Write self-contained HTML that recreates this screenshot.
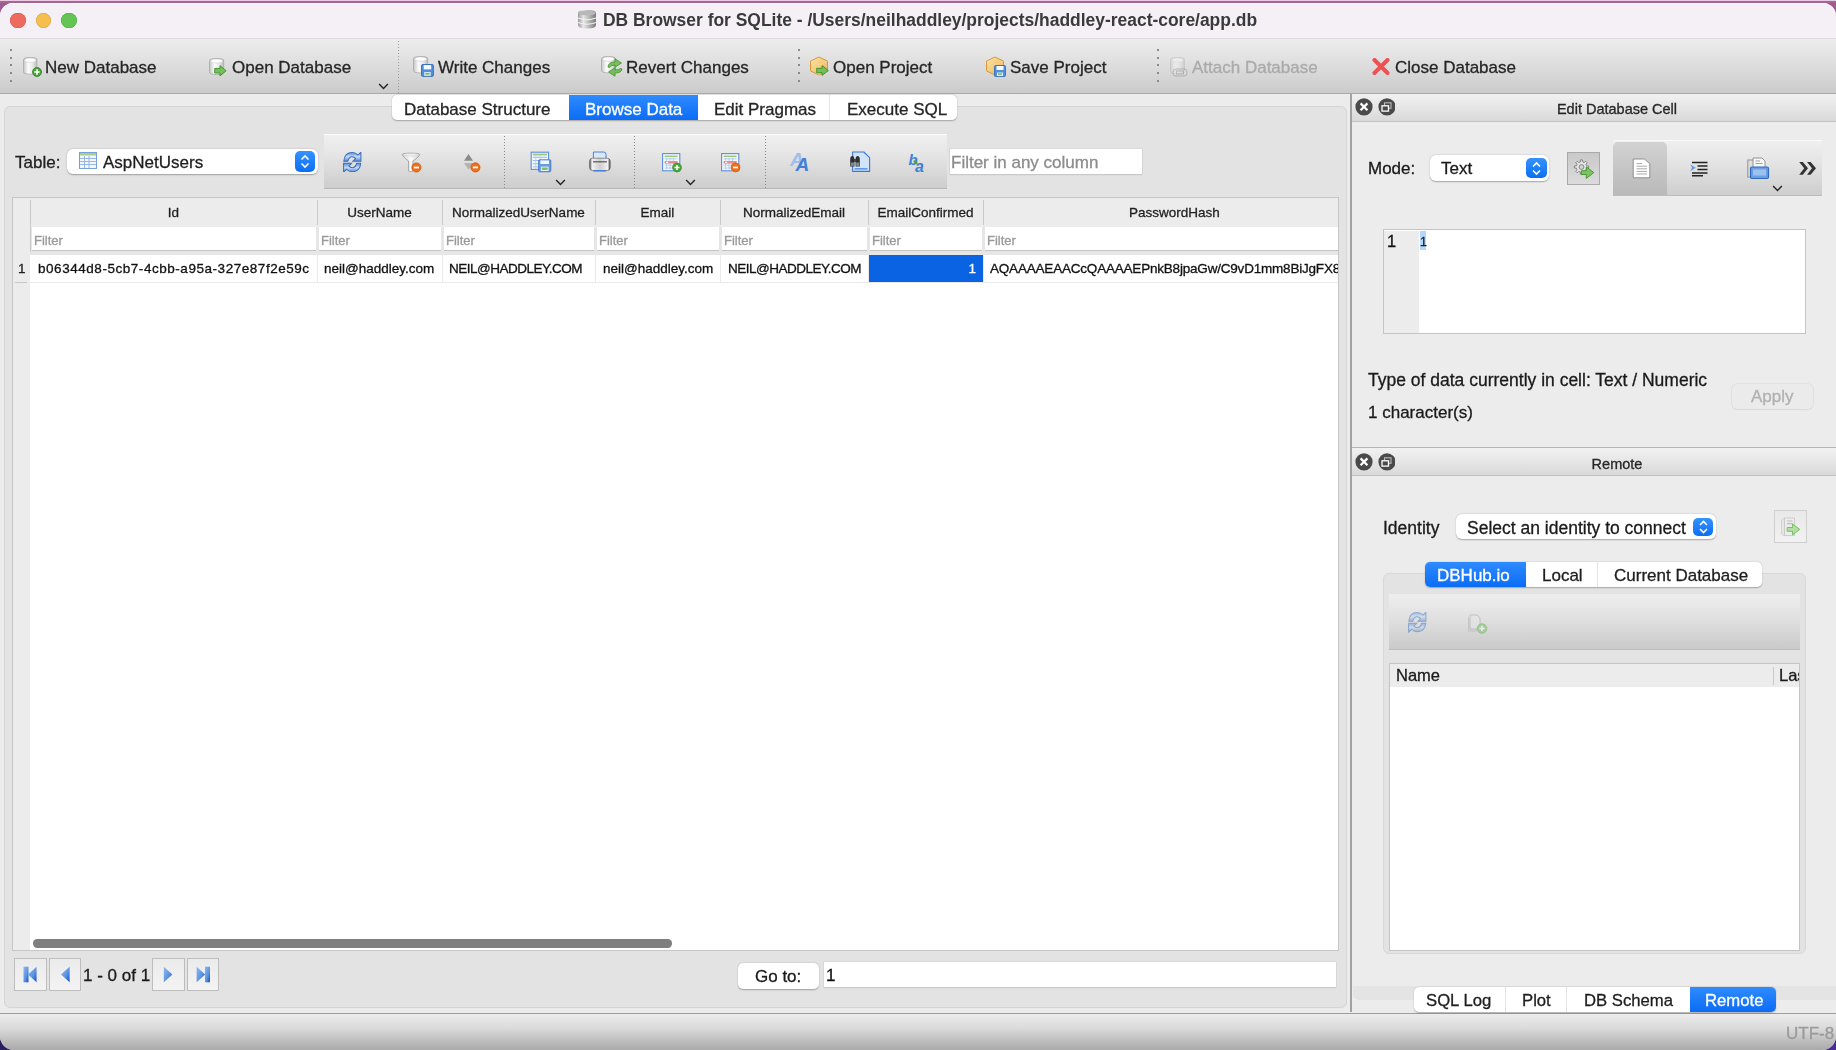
<!DOCTYPE html>
<html><head><meta charset="utf-8">
<style>
*{box-sizing:border-box;margin:0;padding:0}
html,body{width:1836px;height:1050px;overflow:hidden}
body{position:relative;background:#9c5a8e;font-family:"Liberation Sans",sans-serif;color:#1e1e1e}
.a{position:absolute}
.t{position:absolute;white-space:nowrap;line-height:1;will-change:transform;-webkit-text-stroke:.3px currentColor}
#strip{left:0;top:0;width:1836px;height:1px;background:#ecc9e5}
#strip2{left:0;top:1px;width:1836px;height:2px;background:#a4668f}
#blc{left:0;top:1030px;width:30px;height:20px;background:#2b1f5e}
#brc{left:1806px;top:1030px;width:30px;height:20px;background:#4b2c95}
#win{left:0;top:3px;width:1836px;height:1047px;border-radius:13px 13px 14px 14px;overflow:hidden;background:#ececec}
#titlebar{left:0;top:0;width:1836px;height:35px;background:#f4f0f6;border-top:1px solid #fdfcfe}
#toolbar{left:0;top:35px;width:1836px;height:56px;background:linear-gradient(#ececec,#e2e2e2 35%,#cbcbcb);border-bottom:1px solid #a9a9a9;border-top:1px solid #dcdcdc}
.tb{font-size:17px;color:#262626}
.dots{width:2px;background:repeating-linear-gradient(#8a8a8a 0 2px,transparent 2px 7.7px)}
#status{left:0;top:1010px;width:1836px;height:37px;background:linear-gradient(#ececec,#dadada 40%,#a9a9a9);border-top:1px solid #9d9d9d}
</style></head>
<body>
<div class="a" id="strip"></div><div class="a" id="strip2"></div>
<div class="a" id="blc"></div><div class="a" id="brc"></div>
<div class="a" id="win">
 <div class="a" id="titlebar"></div>
 <div class="a" id="toolbar"></div>
 <div class="a" id="status"></div>
</div>
<!-- everything else uses page coordinates -->
<div id="content">
<svg width="0" height="0" style="position:absolute">
 <defs>
  <linearGradient id="gcyl" x1="0" x2="1" y1="0" y2="0"><stop offset="0" stop-color="#c9c9c9"/><stop offset=".35" stop-color="#fbfbfb"/><stop offset=".7" stop-color="#e6e6e6"/><stop offset="1" stop-color="#b9b9b9"/></linearGradient>
  <linearGradient id="gbox" x1="0" x2="1" y1="0" y2="1"><stop offset="0" stop-color="#fde3a6"/><stop offset="1" stop-color="#e7b45a"/></linearGradient>
  <symbol id="cyl" viewBox="0 0 16 18" preserveAspectRatio="none"><path d="M.6 3 Q.6 .5 8 .5 Q15.4 .5 15.4 3 V15 Q15.4 17.5 8 17.5 Q.6 17.5 .6 15Z" fill="url(#gcyl)" stroke="#a9a9a9" stroke-width=".9"/><ellipse cx="8" cy="3.2" rx="6.4" ry="2.1" fill="#fdfdfd" stroke="#c4c4c4" stroke-width=".5"/></symbol>
  <symbol id="floppy" viewBox="0 0 12 12"><rect x=".5" y=".5" width="11" height="11" rx="1" fill="#4f8fdc" stroke="#2d64b3" stroke-width=".8"/><rect x="2.5" y="1" width="7" height="4" fill="#f4f8ff"/><rect x="3" y="7.5" width="6" height="3.5" fill="#e6eef8"/><rect x="4" y="8.3" width="4" height="1.6" fill="#7dbb55"/></symbol>
  <symbol id="greenarrow" viewBox="0 0 14 12" preserveAspectRatio="none"><path d="M.8 3.6 H6.5 V.6 L13.3 6 L6.5 11.4 V8.4 H.8Z" fill="#78bd5e" stroke="#3a9426" stroke-width="1"/></symbol>
  <symbol id="box" viewBox="0 0 20 20"><path d="M10 1 L18.5 5 V15 L10 19 L1.5 15 V5Z" fill="url(#gbox)" stroke="#d69a3a" stroke-width="1"/><path d="M1.5 5 L10 9 L18.5 5 M10 9 V19" fill="none" stroke="#f8d890" stroke-width=".8"/></symbol>
  <symbol id="chev" viewBox="0 0 12 8"><path d="M1 1.2 L6 6.2 L11 1.2" fill="none" stroke="#222" stroke-width="1.6"/></symbol>
 </defs>
</svg>
<!-- traffic lights -->
<div class="a" style="left:10px;top:12.5px;width:15.5px;height:15.5px;border-radius:50%;background:#ee6a5e;box-shadow:inset 0 0 0 .5px #d0544a"></div>
<div class="a" style="left:35.5px;top:12.5px;width:15.5px;height:15.5px;border-radius:50%;background:#f5bf4f;box-shadow:inset 0 0 0 .5px #d7a23b"></div>
<div class="a" style="left:61px;top:12.5px;width:15.5px;height:15.5px;border-radius:50%;background:#62c554;box-shadow:inset 0 0 0 .5px #4ea843"></div>
<!-- title -->
<svg class="a" style="left:577px;top:9px" width="20" height="20" viewBox="0 0 20 20">
 <defs><linearGradient id="gt" x1="0" x2="1"><stop offset="0" stop-color="#9a9a9a"/><stop offset=".3" stop-color="#e8e8e8"/><stop offset="1" stop-color="#7a7a7a"/></linearGradient></defs>
 <path d="M1 4 Q1 1 10 1 Q19 1 19 4 V16 Q19 19.5 10 19.5 Q1 19.5 1 16Z" fill="url(#gt)"/>
 <ellipse cx="10" cy="4" rx="8.5" ry="2.5" fill="#b8b8b8"/>
 <path d="M1 9 Q10 12.5 19 9 M1 13.5 Q10 17 19 13.5" fill="none" stroke="#f2f2f2" stroke-width="1.2"/>
</svg>
<div class="t" style="left:603px;top:12.3px;font-size:17.45px;font-weight:bold;color:#3a3a3a;-webkit-text-stroke:0">DB Browser for SQLite - /Users/neilhaddley/projects/haddley-react-core/app.db</div>

<!-- toolbar -->
<div class="a dots" style="left:9.5px;top:48.5px;height:36px"></div>
<svg class="a" style="left:23px;top:57px" width="15" height="18"><use href="#cyl" width="14.6" height="17.8"/></svg>
<svg class="a" style="left:32px;top:67px" width="10" height="10" viewBox="0 0 10 10"><circle cx="5" cy="5" r="4.5" fill="#4aa63a" stroke="#2f7d23" stroke-width=".8"/><path d="M5 2.3V7.7M2.3 5H7.7" stroke="#fff" stroke-width="1.6"/></svg>
<div class="t tb" style="left:45px;top:58.6px">New Database</div>

<svg class="a" style="left:209.3px;top:57.5px" width="16" height="17"><use href="#cyl" width="15.4" height="17"/></svg>
<svg class="a" style="left:214px;top:65px" width="13" height="12"><use href="#greenarrow" width="12.8" height="11.5"/></svg>
<div class="t tb" style="left:231.8px;top:58.6px">Open Database</div>
<svg class="a" style="left:377.5px;top:83px" width="11" height="7"><use href="#chev" width="11" height="7"/></svg>
<div class="a dots" style="left:398px;top:41px;height:52px;background:repeating-linear-gradient(#9a9a9a 0 1px,transparent 1px 3px);width:1px"></div>

<svg class="a" style="left:413.3px;top:56.1px" width="16" height="18"><use href="#cyl" width="15.4" height="17.5"/></svg>
<svg class="a" style="left:421px;top:63.9px" width="13" height="13"><use href="#floppy" width="12.9" height="12.9"/></svg>
<div class="t tb" style="left:438.2px;top:58.6px">Write Changes</div>

<svg class="a" style="left:601.2px;top:56.1px" width="16" height="18"><use href="#cyl" width="15" height="17.4"/></svg>
<svg class="a" style="left:606.5px;top:58px" width="16" height="19" viewBox="0 0 16 19"><path d="M1 9 Q1.5 4 8 4 V.8 L14.5 5 L8 9.2 V7 Q4 7 2.5 9.5Z" fill="#78bd5e" stroke="#3a9426" stroke-width=".8"/><path d="M15 11 Q14.5 15 8 15 V18.2 L1.5 14 L8 9.8 V12 Q12 12 13.5 10.5Z" fill="#78bd5e" stroke="#3a9426" stroke-width=".8"/></svg>
<div class="t tb" style="left:625.9px;top:58.6px">Revert Changes</div>

<div class="a dots" style="left:798px;top:48.5px;height:36px"></div>
<svg class="a" style="left:809px;top:56px" width="20" height="20"><use href="#box" width="20" height="20"/></svg>
<svg class="a" style="left:816px;top:65px" width="13" height="11"><use href="#greenarrow" width="13" height="11"/></svg>
<div class="t tb" style="left:833.3px;top:58.6px">Open Project</div>

<svg class="a" style="left:985px;top:56px" width="20" height="20"><use href="#box" width="20" height="20"/></svg>
<svg class="a" style="left:994px;top:65px" width="12" height="12"><use href="#floppy" width="12" height="12"/></svg>
<div class="t tb" style="left:1009.8px;top:58.6px">Save Project</div>

<div class="a dots" style="left:1157px;top:48.5px;height:36px"></div>
<svg class="a" style="left:1170px;top:57px;opacity:.45" width="16" height="18"><use href="#cyl" width="15" height="17.4"/></svg>
<svg class="a" style="left:1172px;top:68px;opacity:.5" width="16" height="9" viewBox="0 0 16 9"><rect x="1" y="1" width="14" height="7" rx="3" fill="#ddd" stroke="#888" stroke-width="1"/><rect x="4.5" y="3" width="7" height="3" fill="none" stroke="#888" stroke-width=".9"/></svg>
<div class="t tb" style="left:1192.4px;top:58.6px;color:#aaaaaa">Attach Database</div>

<svg class="a" style="left:1372px;top:58px" width="18" height="17" viewBox="0 0 18 17"><path d="M2.5 2 L15.5 15 M15.5 2 L2.5 15" stroke="#ec5252" stroke-width="4" stroke-linecap="round"/></svg>
<div class="t tb" style="left:1395.3px;top:58.6px">Close Database</div>

<!-- main tab pane -->
<div class="a" style="left:4px;top:106px;width:1343px;height:902px;background:#e3e3e3;border:1px solid #d5d5d5;border-radius:6px"></div>
<!-- tab bar -->
<div class="a" style="left:392px;top:95px;width:565px;height:25px;background:#fff;border-radius:5px;box-shadow:0 .5px 1.5px rgba(0,0,0,.28)"></div>
<div class="a" style="left:569px;top:95px;width:129px;height:25px;background:linear-gradient(#2f8bff,#0b6cf6)"></div>
<div class="a" style="left:829px;top:95px;width:1px;height:25px;background:#e3e3e3"></div>
<div class="t" style="left:403.5px;top:100.6px;font-size:17px;color:#262626">Database Structure</div>
<div class="t" style="left:585px;top:100.6px;font-size:17px;color:#fff">Browse Data</div>
<div class="t" style="left:714px;top:100.6px;font-size:17px;color:#262626">Edit Pragmas</div>
<div class="t" style="left:847px;top:100.6px;font-size:17px;color:#262626">Execute SQL</div>

<!-- table selector -->
<div class="t" style="left:15.3px;top:154.1px;font-size:17px;color:#1e1e1e">Table:</div>
<div class="a" style="left:66.5px;top:149px;width:251px;height:25px;background:#fff;border-radius:6px;box-shadow:0 .5px 1.5px rgba(0,0,0,.3)"></div>
<svg class="a" style="left:79px;top:152px" width="18" height="17" viewBox="0 0 18 17"><rect x=".5" y=".5" width="17" height="16" fill="#f3f7fd" stroke="#7aa0d8"/><rect x="1" y="1" width="16" height="2.5" fill="#a9cf8c"/><path d="M1 6.5H17M1 9.5H17M1 12.5H17M5.5 4V16M10 4V16" stroke="#8fb0e0" stroke-width=".9"/></svg>
<div class="t" style="left:102.8px;top:154.1px;font-size:17px;color:#1e1e1e">AspNetUsers</div>
<div class="a" style="left:295px;top:151px;width:20px;height:20.5px;border-radius:5px;background:linear-gradient(#3592ff,#0a6ff5)"></div>
<svg class="a" style="left:295px;top:151px" width="20" height="21" viewBox="0 0 20 21"><path d="M6.5 8.5 L10 5 L13.5 8.5 M6.5 12.5 L10 16 L13.5 12.5" fill="none" stroke="#fff" stroke-width="1.6"/></svg>

<!-- table toolbar -->
<div class="a" style="left:324px;top:134px;width:622.5px;height:55px;background:linear-gradient(#f0f0f0,#e4e4e4 40%,#cdcdcd);border-top:1px solid #fafafa;border-bottom:1.5px solid #b9b9b9"></div>
<div class="a dots" style="left:504px;top:136px;height:52px;width:1px;background:repeating-linear-gradient(#8a8a8a 0 1px,transparent 1px 3px)"></div>
<div class="a dots" style="left:634px;top:136px;height:52px;width:1px;background:repeating-linear-gradient(#8a8a8a 0 1px,transparent 1px 3px)"></div>
<div class="a dots" style="left:764.5px;top:136px;height:52px;width:1px;background:repeating-linear-gradient(#8a8a8a 0 1px,transparent 1px 3px)"></div>
<!-- refresh -->
<svg class="a" style="left:343px;top:151.7px" width="18.5" height="20.5" viewBox="0 0 18 20.4"><defs><linearGradient id="grf" x1="0" y1="0" x2="0" y2="1"><stop offset="0" stop-color="#5b8fd6"/><stop offset=".5" stop-color="#c8dcf6"/><stop offset="1" stop-color="#4f86d2"/></linearGradient></defs><path d="M0.6 9.2 Q1.4 0.6 9 0.6 Q12.5 0.6 14.6 3 L17.6 0.2 V9.2 H9.6 L12.3 6.6 Q11.2 4.8 8.8 4.8 Q5.8 4.8 4.6 9.2 Z" fill="url(#grf)" stroke="#3a6dbd" stroke-width="1"/><path d="M17.4 11.2 Q16.6 19.6 9 19.6 Q5.5 19.6 3.4 17.2 L0.4 20 V11.2 H8.4 L5.7 13.8 Q6.8 15.6 9.2 15.6 Q12.2 15.6 13.4 11.2 Z" fill="url(#grf)" stroke="#3a6dbd" stroke-width="1"/></svg>
<!-- filter clear -->
<svg class="a" style="left:398px;top:148px" width="26" height="26" viewBox="0 0 26 26"><defs><linearGradient id="gfun" x1="0" x2="1"><stop offset="0" stop-color="#d8d8d8"/><stop offset=".5" stop-color="#fafafa"/><stop offset="1" stop-color="#d0d0d0"/></linearGradient></defs><path d="M4.3 6.5 Q4.3 5.2 13 5.2 Q21.7 5.2 21.7 6.5 Q21.5 8.5 15 13 V23 Q12.5 24.2 10.6 23 V13 Q4.5 8.5 4.3 6.5Z" fill="url(#gfun)" stroke="#9d9d9d" stroke-width=".9"/><ellipse cx="13" cy="6.7" rx="7.6" ry="1.3" fill="#f0f0f0" stroke="#c3c3c3" stroke-width=".5"/><circle cx="18.4" cy="19.5" r="4.6" fill="#ee6f1c" stroke="#c4520c" stroke-width=".7"/><rect x="15.799999999999999" y="18.6" width="5.2" height="1.8" fill="#fff"/></svg>
<!-- sort clear -->
<svg class="a" style="left:458px;top:146px" width="26" height="28" viewBox="0 0 26 28"><path d="M6 14.7 L10.5 8.1 L15 14.7Z" fill="#8a8a8a"/><path d="M6 16.9 L10.5 23.7 L15 16.9Z" fill="#b4b4b4"/><circle cx="17.4" cy="21.4" r="4.6" fill="#ee6f1c" stroke="#c4520c" stroke-width=".7"/><rect x="14.799999999999999" y="20.5" width="5.2" height="1.8" fill="#fff"/></svg>
<!-- save table -->
<svg class="a" style="left:530px;top:151px" width="23" height="22" viewBox="0 0 23 22"><rect x="1.2" y="1.2" width="17.4" height="17.2" fill="#f4f8fd" stroke="#5b8fd8" stroke-width="1.1"/><rect x="2.8" y="2.6" width="14.2" height="1.8" fill="#9cc67e"/><path d="M2.8 6.3H17M2.8 9.5H17M2.8 12.7H17M2.8 15.9H17" stroke="#8fb3e6" stroke-width=".9"/><path d="M5.8 5V17.8M10.2 5V17.8" stroke="#b9cfee" stroke-width=".9"/><rect x="8.6" y="8.8" width="12.2" height="12" rx="1" fill="#6a9ce0" stroke="#3a6fc0" stroke-width=".8"/><rect x="10.4" y="9.4" width="8.6" height="3.6" fill="#f3f7fd"/><rect x="10.9" y="15.6" width="7.6" height="4.4" fill="#eef3fa"/><rect x="11.8" y="16.5" width="5.8" height="2.4" fill="#7fbd5a"/></svg>
<svg class="a" style="left:555px;top:179px" width="11" height="7"><use href="#chev" width="11" height="7"/></svg>
<!-- print -->
<svg class="a" style="left:588px;top:151px" width="24" height="22" viewBox="0 0 24 22"><defs><linearGradient id="gpr" x1="0" x2="1"><stop offset="0" stop-color="#4a4a4a"/><stop offset=".12" stop-color="#f2f2f2"/><stop offset=".5" stop-color="#cfcfcf"/><stop offset=".88" stop-color="#f2f2f2"/><stop offset="1" stop-color="#3e3e3e"/></linearGradient></defs><path d="M5.4 1 H15.5 Q18 1 18 3.5 V10 H5.4Z" fill="#dbe8fa" stroke="#4a82d8" stroke-width="1"/><rect x="1.6" y="7.2" width="20.6" height="12.4" rx="3" fill="url(#gpr)" stroke="#555" stroke-width=".6"/><rect x="5" y="10.2" width="14" height="1.2" fill="#555"/><path d="M5.4 19.8 H18" stroke="#4a82d8" stroke-width="1.6"/></svg>
<!-- insert record -->
<svg class="a" style="left:662px;top:153px" width="24" height="22" viewBox="0 0 24 22"><rect x=".6" y=".6" width="17.2" height="17.2" fill="#f6f9fe" stroke="#5b8fd8" stroke-width="1.1"/><rect x="2.6" y="2.6" width="13" height="1.3" fill="#8cc46a"/><path d="M2.6 5.8H15.6M2.6 12.2H15.6M2.6 15H15.6M4.6 5V16.6M8 5V16.6M11.6 5V16.6" stroke="#a9c4ec" stroke-width=".8"/><rect x="2.6" y="8" width="13" height="2.6" fill="#f08a8a"/><rect x="4" y="8.7" width="2.2" height="1.2" fill="#fff"/><circle cx="15" cy="14.5" r="4.4" fill="#4aa63a" stroke="#2f7d23" stroke-width=".7"/><path d="M15 12V17M12.5 14.5H17.5" stroke="#fff" stroke-width="1.5"/></svg>
<svg class="a" style="left:685px;top:179px" width="11" height="7"><use href="#chev" width="11" height="7"/></svg>
<!-- delete record -->
<svg class="a" style="left:721px;top:153px" width="24" height="22" viewBox="0 0 24 22"><rect x=".6" y=".6" width="17.2" height="17.2" fill="#f6f9fe" stroke="#5b8fd8" stroke-width="1.1"/><rect x="2.6" y="2.6" width="13" height="1.3" fill="#8cc46a"/><path d="M2.6 5.8H15.6M2.6 12.2H15.6M2.6 15H15.6M4.6 5V16.6M8 5V16.6M11.6 5V16.6" stroke="#a9c4ec" stroke-width=".8"/><rect x="2.6" y="8" width="13" height="2.6" fill="#f08a8a"/><rect x="4" y="8.7" width="2.2" height="1.2" fill="#fff"/><circle cx="14.5" cy="14.4" r="4.4" fill="#ee6f1c" stroke="#c4520c" stroke-width=".7"/><rect x="12" y="13.6" width="5" height="1.7" fill="#fff"/></svg>
<!-- font -->
<svg class="a" style="left:789px;top:150px" width="26" height="24" viewBox="0 0 26 24"><text x="1" y="16" font-family="Liberation Sans" font-style="italic" font-weight="bold" font-size="19" fill="#9dbfeb">A</text><text x="6.5" y="21" font-family="Liberation Sans" font-style="italic" font-weight="bold" font-size="19" fill="#3f80da">A</text></svg>
<svg class="a" style="left:849px;top:151px" width="23" height="22" viewBox="0 0 23 22"><path d="M3.6 1 H14.8 L20.6 6.6 V20.4 H3.6Z" fill="#d3e3f8" stroke="#3a78d0" stroke-width="1.1" stroke-linejoin="round"/><rect x="5.5" y="17" width="13" height="1.6" fill="#5a9ae6"/><path d="M1.2 8.5 Q1.2 5 3.3 5 Q5.4 5 5.4 8.5 V15.5 H1.2Z M6.6 8.5 Q6.6 5 8.7 5 Q10.8 5 10.8 8.5 V15.5 H6.6Z" fill="#2f2f2f"/><rect x="4.8" y="8" width="2.4" height="3" fill="#444"/><rect x="1.8" y="11.5" width="3" height="3.4" fill="#8a8a8a"/><rect x="7.2" y="11.5" width="3" height="3.4" fill="#8a8a8a"/></svg>
<svg class="a" style="left:907px;top:151px" width="24" height="23" viewBox="0 0 24 23"><text x="1.5" y="13.5" font-family="Liberation Sans" font-style="italic" font-weight="bold" font-size="15" fill="#3f80da">b</text><text x="8" y="21.2" font-family="Liberation Sans" font-style="italic" font-weight="bold" font-size="16" fill="#3f80da">a</text><path d="M6.8 9.8 L10.2 12.8" stroke="#4aa63a" stroke-width="2"/></svg>
<div class="a" style="left:949.5px;top:149px;width:192.5px;height:25px;background:#fff;box-shadow:0 0 0 .5px #d0d0d0,0 1px 1px rgba(0,0,0,.15)"></div>
<div class="t" style="left:951px;top:154.4px;font-size:17px;color:#8c8c8c">Filter in any column</div>
<!-- grid -->
<div class="a" style="left:11.5px;top:196.5px;width:1327.5px;height:754.5px;background:#fff;border:1px solid #c6c6c6;overflow:hidden">
<div class="a" style="left:0;top:0;width:17.5px;height:760px;background:#ececec"></div>
<div class="a" style="left:0;top:0;width:1330px;height:29.2px;background:#ececec"></div>
<div class="a" style="left:17.5px;top:29.1px;width:1330px;height:28.2px;background:#e6e6e6"></div>
<div class="a" style="left:17.0px;top:2.5px;width:1.2px;height:52px;background:#c9c9c9"></div>
<div class="t" style="left:17.5px;width:287px;text-align:center;top:8.1px;font-size:13.5px;color:#1f1f1f">Id</div>
<div class="a" style="left:19.2px;top:29.1px;width:284.3px;height:24.6px;background:#fff;border-bottom:1px solid #c3c3c3"></div>
<div class="t" style="left:21.0px;top:36.7px;font-size:13px;color:#9a9a9a">Filter</div>
<div class="a" style="left:304.0px;top:57.3px;width:1px;height:27.5px;background:#e9e9e9"></div>
<div class="a" style="left:304.0px;top:2.5px;width:1px;height:25px;background:#c9c9c9"></div>
<div class="t" style="left:304.5px;width:125px;text-align:center;top:8.1px;font-size:13.5px;color:#1f1f1f">UserName</div>
<div class="a" style="left:306.2px;top:29.1px;width:122.3px;height:24.6px;background:#fff;border-bottom:1px solid #c3c3c3"></div>
<div class="t" style="left:308.0px;top:36.7px;font-size:13px;color:#9a9a9a">Filter</div>
<div class="a" style="left:429.0px;top:57.3px;width:1px;height:27.5px;background:#e9e9e9"></div>
<div class="a" style="left:429.0px;top:2.5px;width:1px;height:25px;background:#c9c9c9"></div>
<div class="t" style="left:429.5px;width:153px;text-align:center;top:8.1px;font-size:13.5px;color:#1f1f1f">NormalizedUserName</div>
<div class="a" style="left:431.2px;top:29.1px;width:150.3px;height:24.6px;background:#fff;border-bottom:1px solid #c3c3c3"></div>
<div class="t" style="left:433.0px;top:36.7px;font-size:13px;color:#9a9a9a">Filter</div>
<div class="a" style="left:582.0px;top:57.3px;width:1px;height:27.5px;background:#e9e9e9"></div>
<div class="a" style="left:582.0px;top:2.5px;width:1px;height:25px;background:#c9c9c9"></div>
<div class="t" style="left:582.5px;width:125px;text-align:center;top:8.1px;font-size:13.5px;color:#1f1f1f">Email</div>
<div class="a" style="left:584.2px;top:29.1px;width:122.3px;height:24.6px;background:#fff;border-bottom:1px solid #c3c3c3"></div>
<div class="t" style="left:586.0px;top:36.7px;font-size:13px;color:#9a9a9a">Filter</div>
<div class="a" style="left:707.0px;top:57.3px;width:1px;height:27.5px;background:#e9e9e9"></div>
<div class="a" style="left:707.0px;top:2.5px;width:1px;height:25px;background:#c9c9c9"></div>
<div class="t" style="left:707.5px;width:148px;text-align:center;top:8.1px;font-size:13.5px;color:#1f1f1f">NormalizedEmail</div>
<div class="a" style="left:709.2px;top:29.1px;width:145.3px;height:24.6px;background:#fff;border-bottom:1px solid #c3c3c3"></div>
<div class="t" style="left:711.0px;top:36.7px;font-size:13px;color:#9a9a9a">Filter</div>
<div class="a" style="left:855.0px;top:57.3px;width:1px;height:27.5px;background:#e9e9e9"></div>
<div class="a" style="left:855.0px;top:2.5px;width:1px;height:25px;background:#c9c9c9"></div>
<div class="t" style="left:855.5px;width:115px;text-align:center;top:8.1px;font-size:13.5px;color:#1f1f1f">EmailConfirmed</div>
<div class="a" style="left:857.2px;top:29.1px;width:112.3px;height:24.6px;background:#fff;border-bottom:1px solid #c3c3c3"></div>
<div class="t" style="left:859.0px;top:36.7px;font-size:13px;color:#9a9a9a">Filter</div>
<div class="a" style="left:970.0px;top:57.3px;width:1px;height:27.5px;background:#e9e9e9"></div>
<div class="a" style="left:970.0px;top:2.5px;width:1px;height:25px;background:#c9c9c9"></div>
<div class="t" style="left:970.5px;width:383px;text-align:center;top:8.1px;font-size:13.5px;color:#1f1f1f">PasswordHash</div>
<div class="a" style="left:972.2px;top:29.1px;width:354.3px;height:24.6px;background:#fff;border-bottom:1px solid #c3c3c3"></div>
<div class="t" style="left:974.0px;top:36.7px;font-size:13px;color:#9a9a9a">Filter</div>
<div class="a" style="left:1326.0px;top:57.3px;width:1px;height:27.5px;background:#e9e9e9"></div>
<div class="a" style="left:17.5px;top:84.3px;width:1330px;height:1px;background:#e9e9e9"></div>
<div class="a" style="left:856.0px;top:57.3px;width:114px;height:27.2px;background:#0a63e3"></div>
<div class="t" style="left:25.1px;top:64.0px;font-size:13.5px;letter-spacing:0.54px;color:#111">b06344d8-5cb7-4cbb-a95a-327e87f2e59c</div>
<div class="t" style="left:311.9px;top:64.0px;font-size:13.5px;letter-spacing:0px;color:#111">neil@haddley.com</div>
<div class="t" style="left:436.5px;top:64.0px;font-size:13.5px;letter-spacing:-0.5px;color:#111">NEIL@HADDLEY.COM</div>
<div class="t" style="left:590.0px;top:64.0px;font-size:13.5px;letter-spacing:0px;color:#111">neil@haddley.com</div>
<div class="t" style="left:715.0px;top:64.0px;font-size:13.5px;letter-spacing:-0.5px;color:#111">NEIL@HADDLEY.COM</div>
<div class="t" style="left:977.5px;top:64.0px;font-size:13.5px;letter-spacing:-0.2px;color:#111">AQAAAAEAACcQAAAAEPnkB8jpaGw/C9vD1mm8BiJgFX8</div>
<div class="t" style="left:855.5px;width:108px;text-align:right;top:64.0px;font-size:13.5px;color:#fff">1</div>
<div class="t" style="left:5.0px;top:64.6px;font-size:13.5px;color:#222">1</div>
<div class="a" style="left:2.5px;top:84.0px;width:12px;height:1.2px;background:#c6c6c6"></div>
<div class="a" style="left:20.8px;top:741.9px;width:639.1px;height:8.3px;border-radius:4.2px;background:#7f7f7f"></div>
</div>
<div class="a" style="left:14.4px;top:958.2px;width:32.2px;height:32.4px;background:linear-gradient(#ebebeb,#f3f3f3);border:1px solid #bdbdbd"></div><svg class="a" style="left:14.4px;top:958.2px" width="32.2" height="32.4" viewBox="0 0 32.2 32.4"><defs><linearGradient id="gpg" x1="0" y1="0" x2="1" y2="1"><stop offset="0" stop-color="#8dbaf0"/><stop offset=".55" stop-color="#5d95e2"/><stop offset="1" stop-color="#1450c8"/></linearGradient></defs><rect x="9.5" y="8.7" width="5" height="15.6" fill="url(#gpg)"/><path d="M22.6 8.7 L14 16.5 L22.6 24.3Z" fill="url(#gpg)"/></svg>
<div class="a" style="left:49.4px;top:958.2px;width:31.8px;height:32.4px;background:linear-gradient(#ebebeb,#f3f3f3);border:1px solid #bdbdbd"></div><svg class="a" style="left:49.4px;top:958.2px" width="31.8" height="32.4" viewBox="0 0 31.8 32.4"><path d="M20.6 8.7 L12 16.5 L20.6 24.3Z" fill="url(#gpg)"/></svg>
<div class="t" style="left:83.2px;top:967.3px;font-size:17px;color:#1a1a1a">1 - 0 of 1</div>
<div class="a" style="left:152.4px;top:958.2px;width:32.3px;height:32.4px;background:linear-gradient(#ebebeb,#f3f3f3);border:1px solid #bdbdbd"></div><svg class="a" style="left:152.4px;top:958.2px" width="32.3" height="32.4" viewBox="0 0 32.3 32.4"><path d="M11.8 8.7 L20.4 16.5 L11.8 24.3Z" fill="url(#gpg)"/></svg>
<div class="a" style="left:186.7px;top:958.2px;width:32.1px;height:32.4px;background:linear-gradient(#ebebeb,#f3f3f3);border:1px solid #bdbdbd"></div><svg class="a" style="left:186.7px;top:958.2px" width="32.1" height="32.4" viewBox="0 0 32.1 32.4"><path d="M9.6 8.7 L18.2 16.5 L9.6 24.3Z" fill="url(#gpg)"/><rect x="18" y="8.7" width="5" height="15.6" fill="url(#gpg)"/></svg>
<div class="a" style="left:737.8px;top:962.8px;width:81.6px;height:26px;background:#fff;border-radius:5px;box-shadow:0 .5px 1.5px rgba(0,0,0,.3)"></div>
<div class="t" style="left:755px;top:968.0px;font-size:17px;color:#1a1a1a">Go to:</div>
<div class="a" style="left:823.5px;top:962px;width:512.5px;height:24.5px;background:#fff;box-shadow:0 0 0 .5px #cfcfcf,0 1px 1px rgba(0,0,0,.12)"></div>
<div class="t" style="left:826px;top:967.4px;font-size:17px;color:#111">1</div>

<!-- right dock -->
<div class="a" style="left:1350.4px;top:93.5px;width:1.8px;height:918px;background:#a2a2a2"></div>
<!-- dock bottom pane (tab area) -->
<div class="a" style="left:1353px;top:986px;width:490px;height:12.6px;background:#e4e4e4;border-radius:0 0 6px 6px;box-shadow:0 .5px 0 #dadada"></div>
<!-- Edit Database Cell title -->
<div class="a" style="left:1352px;top:94px;width:484px;height:27.5px;background:linear-gradient(#f1f1f1,#e6e6e6 50%,#d9d9d9);border-bottom:1px solid #c2c2c2"></div>
<svg class="a" style="left:1355px;top:98px" width="40" height="18" viewBox="0 0 40 18"><circle cx="9" cy="8.8" r="8.6" fill="#4a4a4a"/><path d="M5.6 5.4 L12.4 12.2 M12.4 5.4 L5.6 12.2" stroke="#fff" stroke-width="2.3"/><circle cx="32" cy="8.8" r="8.6" fill="#4a4a4a"/><rect x="29.5" y="4.8" width="6.5" height="5.5" fill="none" stroke="#bbb" stroke-width="1.1"/><rect x="27" y="7.8" width="6.5" height="5.3" fill="#4a4a4a" stroke="#fff" stroke-width="1.3"/></svg>
<div class="t" style="left:1352px;width:530px;text-align:center;top:102.2px;font-size:14.5px;color:#262626">Edit Database Cell</div>

<div class="t" style="left:1368.4px;top:160.4px;font-size:17px;color:#1a1a1a">Mode:</div>
<div class="a" style="left:1430px;top:155px;width:119px;height:26px;background:#fff;border-radius:6px;box-shadow:0 .5px 1.5px rgba(0,0,0,.3)"></div>
<div class="t" style="left:1441.2px;top:160.4px;font-size:17px;color:#1a1a1a">Text</div>
<div class="a" style="left:1526px;top:157.5px;width:20.5px;height:20.5px;border-radius:5px;background:linear-gradient(#3592ff,#0a6ff5)"></div>
<svg class="a" style="left:1526px;top:157.5px" width="21" height="21" viewBox="0 0 20 21"><path d="M6.5 8.5 L10 5 L13.5 8.5 M6.5 12.5 L10 16 L13.5 12.5" fill="none" stroke="#fff" stroke-width="1.6"/></svg>
<div class="a" style="left:1567px;top:152px;width:33px;height:33px;background:linear-gradient(#c9c9c9,#dbdbdb);border:1px solid #a9a9a9"></div>
<svg class="a" style="left:1572px;top:157px" width="23" height="23" viewBox="0 0 23 23"><path d="M14.56 8.79 L16.63 8.99 L16.63 11.01 L14.56 11.21 L13.93 12.72 L15.26 14.32 L13.82 15.76 L12.22 14.43 L10.71 15.06 L10.51 17.13 L8.49 17.13 L8.29 15.06 L6.78 14.43 L5.18 15.76 L3.74 14.32 L5.07 12.72 L4.44 11.21 L2.37 11.01 L2.37 8.99 L4.44 8.79 L5.07 7.28 L3.74 5.68 L5.18 4.24 L6.78 5.57 L8.29 4.94 L8.49 2.87 L10.51 2.87 L10.71 4.94 L12.22 5.57 L13.82 4.24 L15.26 5.68 L13.93 7.28Z M11.90 10 A2.4 2.4 0 1 0 7.10 10 A2.4 2.4 0 1 0 11.90 10Z" fill="#e6e6e6" fill-rule="evenodd" stroke="#7d7d7d" stroke-width=".9"/><path d="M9.3 13.7 H14.3 V9.8 L21.8 15.6 L14.3 21.4 V17.5 H9.3Z" fill="#7fc165" stroke="#3a9426" stroke-width=".9"/></svg>
<!-- cell toolbar -->
<div class="a" style="left:1613px;top:140px;width:209px;height:56px;background:linear-gradient(#efefef,#e4e4e4 40%,#cecece);border-top:1px solid #fafafa;border-bottom:1.5px solid #bcbcbc"></div>
<div class="a" style="left:1613px;top:141.5px;width:54px;height:53.5px;background:linear-gradient(#d2d2d2,#b9b9b9);border-radius:5px 5px 0 0"></div>
<svg class="a" style="left:1631.5px;top:158px" width="20" height="22" viewBox="0 0 20 22"><path d="M1.2 1 H12.5 L17.8 5.8 V19.8 H1.2Z" fill="#fff" stroke="#8f8f8f" stroke-width="1" stroke-linejoin="round"/><path d="M4.5 5.6H10M4.5 8.2H15M4.5 10.8H15M4.5 13.4H15M4.5 16H15" stroke="#a9a9a9" stroke-width="1"/></svg>
<svg class="a" style="left:1689px;top:160px" width="20" height="18" viewBox="0 0 20 18"><path d="M3 2.5H18.5M8.5 6H18.5M8.5 9.5H18.5M3 13H18.5M3 15.7H14" stroke="#222" stroke-width="1.4"/><path d="M1.2 4.5 L6.8 7.8 L1.2 11.2 L3 7.8Z" fill="#5c9ae8"/></svg>
<svg class="a" style="left:1747px;top:157px" width="23" height="23" viewBox="0 0 23 23"><rect x=".8" y="3" width="6" height="17" fill="#ddd" stroke="#8a8a8a" stroke-width=".9"/><path d="M6 1 H15 L18 4 V12 H6Z" fill="#f6f6f6" stroke="#8a8a8a" stroke-width=".9"/><path d="M8.5 4H13M8.5 6.5H15.5" stroke="#999" stroke-width=".9"/><rect x="3.5" y="10" width="18" height="11.5" rx="1.5" fill="#6d9ee0" stroke="#2f68bf" stroke-width="1.2"/><rect x="6" y="12.5" width="13" height="6" fill="#9cc0ef"/></svg>
<svg class="a" style="left:1772px;top:184.5px" width="11" height="7"><use href="#chev" width="11" height="7"/></svg>
<svg class="a" style="left:1799px;top:161.8px" width="18" height="13" viewBox="0 0 18 13"><path d="M0.2 0 H3.8 L9 6.35 L3.8 12.7 H0.2 L5.2 6.35Z M8 0 H11.6 L17 6.35 L11.6 12.7 H8 L13 6.35Z" fill="#333"/></svg>
<!-- editor -->
<div class="a" style="left:1383px;top:229.3px;width:422.5px;height:104.5px;background:#fff;border:1px solid #c4c4c4;border-top:1.6px solid #c4c4c4"></div>
<div class="a" style="left:1384px;top:231px;width:34.5px;height:102px;background:#ececec"></div>
<div class="a" style="left:1420px;top:231px;width:6.1px;height:18.7px;background:#b3d7ff"></div>
<div class="t" style="left:1386.5px;top:232.5px;font-size:16.5px;color:#111">1</div>
<div class="t" style="left:1420.3px;top:236px;font-size:12.5px;color:#222">1</div>

<div class="t" style="left:1368.4px;top:371.6px;font-size:17.5px;color:#1a1a1a">Type of data currently in cell: Text / Numeric</div>
<div class="t" style="left:1368.4px;top:404.4px;font-size:17px;color:#1a1a1a">1 character(s)</div>
<div class="a" style="left:1732.4px;top:383.8px;width:81px;height:25.7px;background:#ebebeb;border-radius:5px;box-shadow:0 0 0 .6px #d9d9d9,0 .6px 1px rgba(0,0,0,.08)"></div>
<div class="t" style="left:1751.4px;top:388.0px;font-size:17px;color:#b0b0b0">Apply</div>

<!-- divider -->
<div class="a" style="left:1352px;top:447px;width:484px;height:1px;background:#b6b6b6"></div>
<!-- Remote title -->
<div class="a" style="left:1352px;top:448px;width:484px;height:28px;background:linear-gradient(#f1f1f1,#e6e6e6 50%,#d9d9d9);border-bottom:1px solid #c2c2c2"></div>
<svg class="a" style="left:1355px;top:453px" width="40" height="18" viewBox="0 0 40 18"><circle cx="9" cy="8.8" r="8.6" fill="#4a4a4a"/><path d="M5.6 5.4 L12.4 12.2 M12.4 5.4 L5.6 12.2" stroke="#fff" stroke-width="2.3"/><circle cx="32" cy="8.8" r="8.6" fill="#4a4a4a"/><rect x="29.5" y="4.8" width="6.5" height="5.5" fill="none" stroke="#bbb" stroke-width="1.1"/><rect x="27" y="7.8" width="6.5" height="5.3" fill="#4a4a4a" stroke="#fff" stroke-width="1.3"/></svg>
<div class="t" style="left:1352px;width:530px;text-align:center;top:456.8px;font-size:14.5px;color:#262626">Remote</div>

<div class="t" style="left:1383.2px;top:519.7px;font-size:17.5px;color:#1a1a1a">Identity</div>
<div class="a" style="left:1455.7px;top:513.8px;width:260.5px;height:25.2px;background:#fff;border-radius:6px;box-shadow:0 .5px 1.5px rgba(0,0,0,.3)"></div>
<div class="t" style="left:1466.5px;top:519.7px;font-size:17.5px;color:#1a1a1a">Select an identity to connect</div>
<div class="a" style="left:1692.7px;top:517.8px;width:20.8px;height:18.5px;border-radius:5px;background:linear-gradient(#3592ff,#0a6ff5)"></div>
<svg class="a" style="left:1692.7px;top:517px" width="21" height="20" viewBox="0 0 20 20"><path d="M6.5 8 L10 4.5 L13.5 8 M6.5 12 L10 15.5 L13.5 12" fill="none" stroke="#fff" stroke-width="1.6"/></svg>
<div class="a" style="left:1774px;top:510.4px;width:32.6px;height:32.6px;background:linear-gradient(#e9e9e9,#f1f1f1);border:1px solid #cfcfcf"></div>
<svg class="a" style="left:1780px;top:516px" width="22" height="22" viewBox="0 0 22 22"><path d="M1.5 4 L4.5 2 V20 L1.5 18Z" fill="#e6e6e6" stroke="#c8c8c8" stroke-width=".7"/><rect x="4.5" y="2" width="10" height="17.5" fill="#ececec" stroke="#c6c6c6" stroke-width=".8"/><path d="M7 5H12.5M7 7.6H12.5" stroke="#bdbdbd" stroke-width="1.1"/><path d="M7.2 11.5 H12.5 V8 L19.8 13.4 L12.5 18.8 V15.3 H7.2Z" fill="#b5dca6" stroke="#74c062" stroke-width="1"/></svg>

<!-- remote group -->
<div class="a" style="left:1383.2px;top:573.2px;width:423px;height:380.5px;background:#e3e3e3;border:1px solid #d8d8d8;border-radius:6px"></div>
<div class="a" style="left:1425.1px;top:561.9px;width:337.1px;height:25.4px;background:#fff;border-radius:5px;box-shadow:0 .5px 1.5px rgba(0,0,0,.28)"></div>
<div class="a" style="left:1425.1px;top:561.9px;width:101px;height:25.4px;background:linear-gradient(#2f8bff,#0b6cf6);border-radius:5px 0 0 5px"></div>
<div class="a" style="left:1597px;top:562px;width:1px;height:25.3px;background:#e3e3e3"></div>
<div class="t" style="left:1437.3px;top:567.1px;font-size:17px;color:#fff">DBHub.io</div>
<div class="t" style="left:1542.2px;top:567.1px;font-size:17px;color:#1e1e1e">Local</div>
<div class="t" style="left:1614.3px;top:567.1px;font-size:17px;color:#1e1e1e">Current Database</div>
<div class="a" style="left:1389.2px;top:594px;width:411px;height:56.3px;background:linear-gradient(#eeeeee,#e2e2e2 40%,#cacaca);border-bottom:1.5px solid #bcbcbc"></div>
<svg class="a" style="left:1408px;top:612px;opacity:.5" width="18.5" height="20.5" viewBox="0 0 18 20.4"><path d="M0.6 9.2 Q1.4 0.6 9 0.6 Q12.5 0.6 14.6 3 L17.6 0.2 V9.2 H9.6 L12.3 6.6 Q11.2 4.8 8.8 4.8 Q5.8 4.8 4.6 9.2 Z" fill="url(#grf)" stroke="#3a6dbd" stroke-width="1"/><path d="M17.4 11.2 Q16.6 19.6 9 19.6 Q5.5 19.6 3.4 17.2 L0.4 20 V11.2 H8.4 L5.7 13.8 Q6.8 15.6 9.2 15.6 Q12.2 15.6 13.4 11.2 Z" fill="url(#grf)" stroke="#3a6dbd" stroke-width="1"/></svg>
<svg class="a" style="left:1467px;top:613.5px;opacity:.5" width="21" height="20" viewBox="0 0 21 20"><path d="M3 1 H10 L13 4 V15 H3Z" fill="#e8e8e8" stroke="#999" stroke-width=".9"/><path d="M1.5 3 V17 H10" fill="none" stroke="#aaa" stroke-width=".9"/><circle cx="15" cy="14.5" r="4.8" fill="#6fc35a" stroke="#3f9a2b" stroke-width=".7"/><path d="M15 11.8V17.2M12.3 14.5H17.7" stroke="#fff" stroke-width="1.6"/></svg>
<!-- list -->
<div class="a" style="left:1389.2px;top:663.2px;width:411px;height:287.5px;background:#fff;border:1px solid #c4c4c4;overflow:hidden">
 <div class="a" style="left:0;top:0;width:411px;height:23px;background:#ececec"></div>
 <div class="a" style="left:383px;top:3px;width:1px;height:18px;background:#c9c9c9"></div>
 <div class="t" style="left:6px;top:3.3px;font-size:16.5px;color:#1a1a1a">Name</div>
 <div class="t" style="left:389px;top:3.3px;font-size:16.5px;color:#1a1a1a">Las</div>
</div>

<!-- bottom tabs -->
<div class="a" style="left:1414.3px;top:987.3px;width:361.4px;height:25.2px;background:#fff;border-radius:5px;box-shadow:0 .5px 1.5px rgba(0,0,0,.28)"></div>
<div class="a" style="left:1689.5px;top:987.3px;width:86.2px;height:25.2px;background:linear-gradient(#2f8bff,#0b6cf6);border-radius:0 5px 5px 0"></div>
<div class="a" style="left:1505px;top:987.3px;width:1px;height:25.2px;background:#e3e3e3"></div>
<div class="a" style="left:1566px;top:987.3px;width:1px;height:25.2px;background:#e3e3e3"></div>
<div class="t" style="left:1426px;top:992.5px;font-size:16.7px;color:#1e1e1e">SQL Log</div>
<div class="t" style="left:1522.4px;top:992.5px;font-size:16.7px;color:#1e1e1e">Plot</div>
<div class="t" style="left:1584px;top:992.5px;font-size:16.7px;color:#1e1e1e">DB Schema</div>
<div class="t" style="left:1705.4px;top:992.5px;font-size:16.7px;color:#fff">Remote</div>
<div class="t" style="left:1785.6px;top:1024.6px;font-size:17px;color:#9a9a9a">UTF-8</div>

</div>
</body></html>
